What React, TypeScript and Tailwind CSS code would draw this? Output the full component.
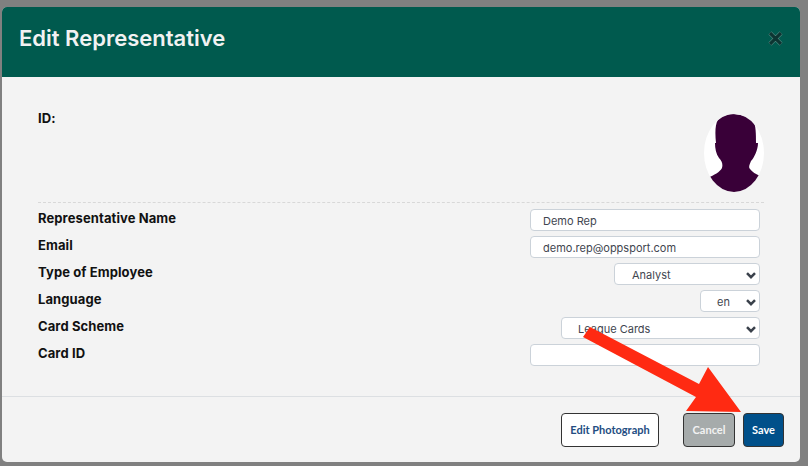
const fields = [
  { label: "Representative Name", value: "Demo Rep", width: "w-[230px]", pad: "pl-3" },
  { label: "Email", value: "demo.rep@oppsport.com", width: "w-[230px]", pad: "pl-3" },
  { label: "Type of Employee", value: "Analyst", width: "w-[146px]", pad: "pl-[17px]", select: true },
  { label: "Language", value: "en", width: "w-[60px]", pad: "pl-4", select: true },
  { label: "Card Scheme", value: "League Cards", width: "w-[199px]", pad: "pl-4", select: true },
  { label: "Card ID", value: "", width: "w-[230px]", pad: "pl-3" },
];

function Chevron() {
  return (
    <svg width="10" height="7" viewBox="0 0 10 7" className="ml-auto mr-[3px] shrink-0">
      <path d="M1 1.2 L5 5.2 L9 1.2" fill="none" stroke="#3a414b" strokeWidth="2.5" />
    </svg>
  );
}

function Avatar() {
  return (
    <svg width="60" height="78" viewBox="0 0 60 78" className="shrink-0">
      <defs>
        <clipPath id="avatar-clip">
          <ellipse cx="30" cy="39" rx="30" ry="39" />
        </clipPath>
      </defs>
      <ellipse cx="30" cy="39" rx="30" ry="39" fill="#ffffff" />
      <path
        clipPath="url(#avatar-clip)"
        fill="#390038"
        d="M26 0 C32 0 44 1 49 7 C52 11 52 20 52 29 L54 29 C54 36 50 44 47 47 C46 50 44 53 46 55 C48 58 52 60 56 62 L56 80 L0 80 L4 64 C10 61 16 58 18 54 C19 50 18 47 15 44 C12 40 11 34 11 29 L12 29 C11 20 11 10 14 6 C17 2 22 1 26 0 Z"
      />
    </svg>
  );
}

export default function App() {
  return (
    <div className="relative h-[466px] w-[808px] overflow-hidden bg-[#808080] pl-[2px] pt-[7px] font-['Inter',sans-serif]">
      <div className="h-[455px] w-[798px] overflow-hidden rounded-[5px] bg-[#f3f3f3]">
        <div className="flex h-[70px] items-center justify-between bg-[#005a4e] pb-[7px] pl-[17px] pr-[17px]">
          <h1 className="text-[22px] font-semibold text-[#f2f2f2]">Edit Representative</h1>
          <svg width="15" height="15" viewBox="0 0 15 15">
            <path d="M2 2 L13 13 M13 2 L2 13" stroke="#7fa8a0" strokeWidth="4" />
            <path d="M2 2 L13 13 M13 2 L2 13" stroke="#0c3532" strokeWidth="3.2" />
          </svg>
        </div>

        <div className="h-[319px] pl-9 pr-9">
          <div className="flex h-[126px] justify-between border-b border-dashed border-[#d8d8d8] pt-[37px]">
            <span className="-mt-[4px] text-[13px] leading-4 font-bold tracking-[0.1px] text-[#111111]">ID:</span>
            <Avatar />
          </div>
          <div className="mt-[6px] flex flex-col gap-[5px] pr-1">
            {fields.map((field) => (
              <div key={field.label} className="flex h-[22px] items-center justify-between">
                <span className="-mt-[2px] text-[13px] font-bold tracking-[0.1px] text-[#111111]">{field.label}</span>
                <div
                  className={`flex h-[22px] items-center rounded-[4px] border border-[#cbd2d9] bg-white pt-[2px] text-[11px] text-[#3f4650] ${field.width} ${field.pad}`}
                >
                  {field.value}
                  {field.select ? <Chevron /> : null}
                </div>
              </div>
            ))}
          </div>
        </div>

        <div className="flex h-[66px] items-start justify-end border-t border-[#dcdfe2] pr-4 pt-4 font-['Lato',sans-serif] text-[11px] font-bold">
          <button className="h-[34px] w-[98px] rounded-[4px] border border-[#333333] bg-white text-[#234d82]">
            Edit Photograph
          </button>
          <button className="ml-6 h-[34px] w-[52px] rounded-[4px] border border-[#333333] bg-[#a6abab] text-[#f2f2f2]">
            Cancel
          </button>
          <button className="ml-2 h-[34px] w-[41px] rounded-[4px] border border-[#333333] bg-[#00508a] text-white">
            Save
          </button>
        </div>
      </div>

      <svg className="absolute left-0 top-0" width="808" height="466" viewBox="0 0 808 466">
        <path d="M583 337 L590 327 L699 384 L708 367 L741 412 L686 411 L696 397 Z" fill="#ff2a12" />
      </svg>
    </div>
  );
}
